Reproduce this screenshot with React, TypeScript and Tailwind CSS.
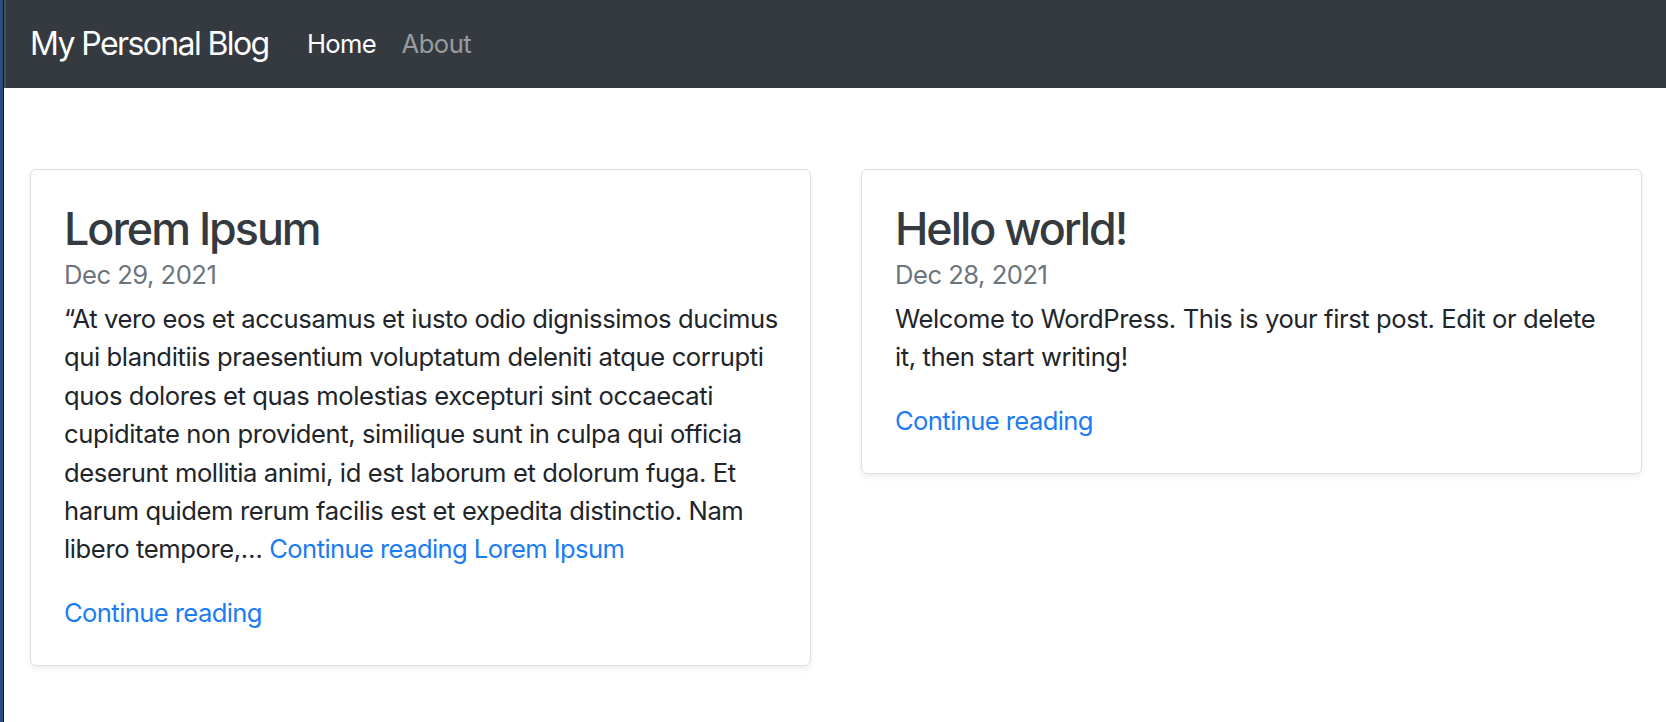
import React from "react";

interface Post {
  title: string;
  date: string;
  lines: string[];
  inlineLink?: string;
}

const posts: Post[] = [
  {
    title: "Lorem Ipsum",
    date: "Dec 29, 2021",
    lines: [
      "\u201cAt vero eos et accusamus et iusto odio dignissimos ducimus",
      "qui blanditiis praesentium voluptatum deleniti atque corrupti",
      "quos dolores et quas molestias excepturi sint occaecati",
      "cupiditate non provident, similique sunt in culpa qui officia",
      "deserunt mollitia animi, id est laborum et dolorum fuga. Et",
      "harum quidem rerum facilis est et expedita distinctio. Nam",
      "libero tempore,\u2026",
    ],
    inlineLink: "Continue reading Lorem Ipsum",
  },
  {
    title: "Hello world!",
    date: "Dec 28, 2021",
    lines: [
      "Welcome to WordPress. This is your first post. Edit or delete",
      "it, then start writing!",
    ],
  },
];

function PostCard({ post }: { post: Post }) {
  return (
    <div className="bg-white border border-[#dfdfdf] rounded-[6px] shadow-[0_3px_6px_rgba(0,0,0,0.07)] px-[33px] pt-[32px] pb-[32px]">
      <h3 className="text-[44.8px] leading-[54px] font-medium text-[#343a40] tracking-[-2px]">{post.title}</h3>
      <div className="text-[25.6px] leading-[38px] text-[#6c757d] tracking-[-0.5px]">{post.date}</div>
      <p className="mt-[6px] mb-[25.6px] text-[25.6px] leading-[38.4px] text-[#212529] tracking-[-0.4px] whitespace-nowrap">
        {post.lines.map((line, i) => (
          <React.Fragment key={i}>
            {line}
            {i < post.lines.length - 1 ? <br /> : null}
          </React.Fragment>
        ))}
        {post.inlineLink && (
          <>
            {" "}
            <a href="#" className="text-[#1b7cf5] tracking-[-0.6px]">{post.inlineLink}</a>
          </>
        )}
      </p>
      <a href="#" className="block text-[25.6px] leading-[38.4px] text-[#1b7cf5] tracking-[-0.6px]">Continue reading</a>
    </div>
  );
}

export default function App() {
  return (
    <div className="flex min-h-screen bg-white" style={{ fontFamily: "Inter, 'Noto Sans', sans-serif" }}>
      <div className="w-[3px] bg-[#2d4a7c]" />
      <div className="w-px bg-[#15181b]" />
      <div className="flex-1">
        <nav className="h-[88px] bg-[#343a40] flex items-center pl-[24px] border-l-2 border-[#4a4f55]">
          <a href="#" className="text-[32px] leading-[48px] text-white mr-[25.6px] tracking-[-1.6px]">My Personal Blog</a>
          <a href="#" className="px-[12.8px] text-[25.6px] leading-[38.4px] text-white tracking-[-0.7px]">Home</a>
          <a href="#" className="px-[12.8px] text-[25.6px] leading-[38.4px] text-white/50 tracking-[-0.5px]">About</a>
        </nav>
        <main className="mt-[81px] pl-[26px] pr-[24px] grid grid-cols-2 gap-[50px] items-start">
          {posts.map((p) => (
            <PostCard key={p.title} post={p} />
          ))}
        </main>
      </div>
    </div>
  );
}
